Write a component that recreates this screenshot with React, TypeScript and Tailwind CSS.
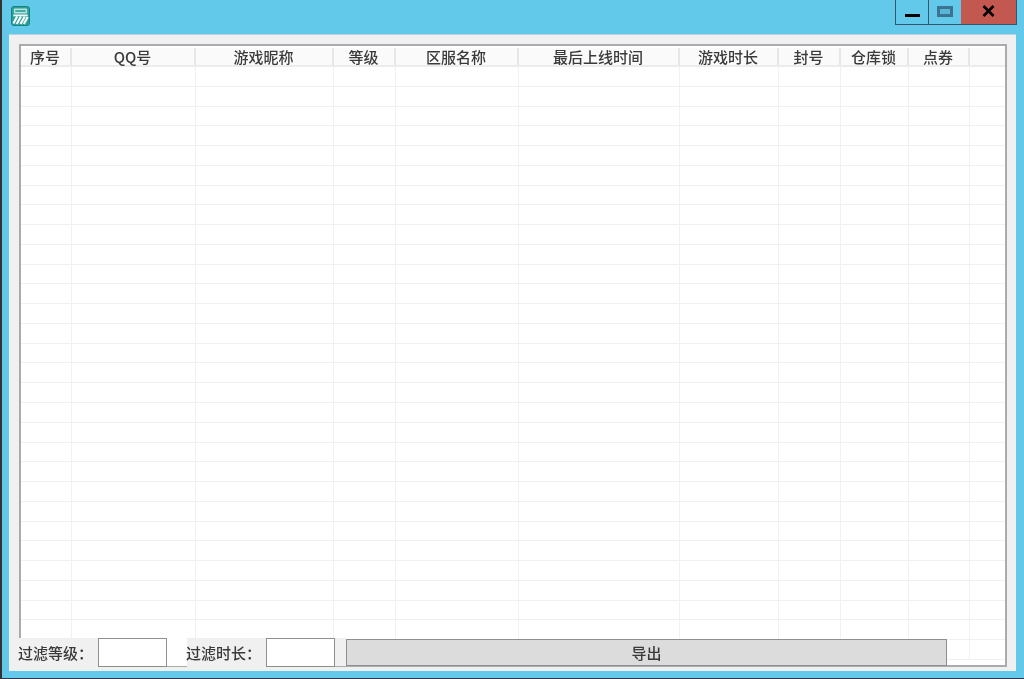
const FONT = "font-['Noto_Sans_CJK_SC','Noto_Sans',sans-serif]";

const columns = [
  { title: "序号", width: 51 },
  { title: "QQ号", width: 124 },
  { title: "游戏昵称", width: 138 },
  { title: "等级", width: 62 },
  { title: "区服名称", width: 123 },
  { title: "最后上线时间", width: 161 },
  { title: "游戏时长", width: 99 },
  { title: "封号", width: 62 },
  { title: "仓库锁", width: 68 },
  { title: "点券", width: 61 },
];

const rows = Array.from({ length: 30 }, (_, i) => i);

const AppLogo = () => (
  <svg width="19" height="20" viewBox="0 0 20 20" className="shrink-0" preserveAspectRatio="none">
    <rect x="0.5" y="0.5" width="19" height="19" rx="2.5" fill="#2a9f98" stroke="#16817c" />
    <rect x="3" y="2.5" width="14" height="5" rx="1" fill="#b5e4dd" />
    <rect x="4.5" y="4.2" width="11" height="1.6" fill="#2a9f98" />
    <rect x="2.5" y="8.5" width="15" height="1.8" fill="#f1faf8" />
    <path d="M6.5 10.5 2.5 17.5M10.5 10.5 6 18M14.5 10.5 10 18M17.5 11 13.5 18" stroke="#fafefd" strokeWidth="2.3" fill="none" />
  </svg>
);

const WindowButtons = () => (
  <div className="flex h-[25px] border-b border-l border-r border-[#37566a]">
    <div className="flex w-[33px] items-end justify-center border-r border-[#37566a] pb-[7px] pl-[1px]">
      <div className="h-[3px] w-[15px] bg-black" />
    </div>
    <div className="flex w-[32px] items-start justify-center pt-[6px]">
      <div className="h-[11px] w-[16px] border-[3px] border-[#3b7390] bg-[#58b6d6]" />
    </div>
    <div className="flex w-[55px] items-center justify-center bg-[#c25850] pb-[2px]">
      <svg width="13" height="12" viewBox="0 0 13 12">
        <path d="M1.5 1 11.5 11M11.5 1 1.5 11" stroke="#000" strokeWidth="2.6" />
      </svg>
    </div>
  </div>
);

const Grid = () => (
  <div className="h-[623px] overflow-hidden border-[2px] border-[#a9abae] bg-white">
    <div className="mt-[2px] flex h-[19px] border-b-[2px] border-[#ececec] bg-[#fafafa]">
      {columns.map((col) => (
        <div
          key={col.title}
          style={{ width: col.width }}
          className="flex shrink-0 items-center justify-center border-r-[2px] border-[#e6e6e6] pr-[1px] text-[15px] font-medium leading-none text-[#3a3a3a]"
        >
          {col.title}
        </div>
      ))}
    </div>
    {rows.map((r) => (
      <div key={r} className="flex h-[19.78px] border-b-[1.5px] border-[#f1f1f1]">
        {columns.map((col) => (
          <div key={col.title} style={{ width: col.width }} className="shrink-0 border-r-[1.5px] border-[#f1f1f1]" />
        ))}
      </div>
    ))}
  </div>
);

const Filter = ({ label }: { label: string }) => (
  <div className="flex h-[29px]">
    <div className="flex w-[79px] items-center bg-[#f0f0f0] text-[15px] font-medium leading-none text-[#3a3a3a]">
      <span className="-ml-[1px]">{label}</span>
    </div>
    <div className="h-[29px] w-[69px] border-[1.5px] border-[#8f8f8f] bg-white" />
  </div>
);

export default function App() {
  return (
    <div className={`${FONT} flex h-[679px] w-[1024px] flex-col overflow-hidden border-b border-l-[2px] border-b-[#2e3a40] border-l-[#333] bg-[#63c9ea] blur-[0.3px]`}>
      <div className="flex h-[34px] shrink-0 items-start justify-between pr-[7px]">
        <div className="pl-[9px] pt-[6px]">
          <AppLogo />
        </div>
        <WindowButtons />
      </div>
      <div className="ml-[7px] h-[637px] w-[1007px] border-t-[1.5px] border-[#b9d3de] bg-[#f0f0f0] pl-[10px] pt-[9px]">
        <div className="w-[988px]">
          <Grid />
        </div>
        <div className="-mt-[29px] flex w-[929px] items-start">
          <Filter label="过滤等级：" />
          <div className="h-[29px] w-[20px] border-b border-[#a9abae] bg-white" />
          <Filter label="过滤时长：" />
          <div className="h-[29px] w-[11px] border-b border-[#a9abae] bg-[#f0f0f0]" />
          <button className="mt-[1px] h-[27px] w-[601px] border-[1.5px] border-[#8f8f8f] bg-[#dcdcdc] text-[15px] font-medium leading-none text-[#3a3a3a]">
            导出
          </button>
        </div>
      </div>
    </div>
  );
}
